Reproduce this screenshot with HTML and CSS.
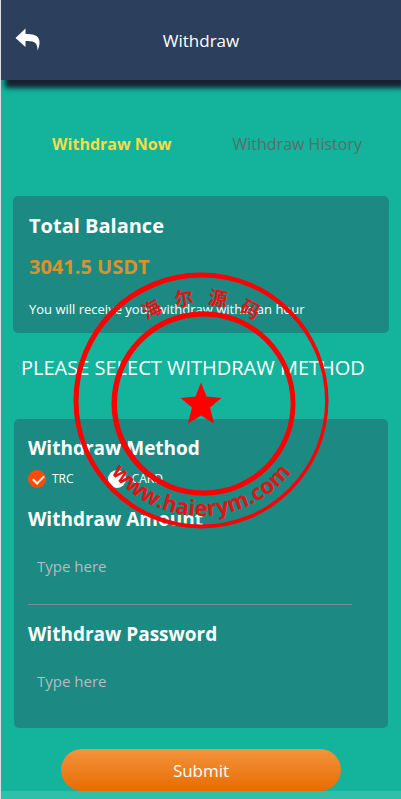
FILE: index.html
```
<!DOCTYPE html>
<html lang="en">
<head>
  <meta charset="UTF-8">
  <title>Withdraw</title>
  <meta name="viewport" content="width=device-width, initial-scale=1.0">
  <link rel="stylesheet" href="styles.css">
</head>
<body>
  <header class="header">
    <button class="back-btn" type="button" aria-label="Back">
      <svg width="26" height="24" viewBox="0 0 26 24">
        <path fill="#fff" d="M0.500 10L10.500 0.500V6C19 5.500 25 8 24.500 15C24.400 18 23.500 20 22.500 22.500C22.800 15.500 20 12.500 10.500 13V19Z"/>
      </svg>
    </button>
    <h1>Withdraw</h1>
  </header>

  <main class="content">
    <nav class="tabs">
      <a class="tab active" href="#now">Withdraw Now</a>
      <a class="tab" href="#history">Withdraw History</a>
    </nav>

    <section class="card balance">
      <h2>Total Balance</h2>
      <p class="amount">3041.5 USDT</p>
      <p class="note">You will receive your withdraw within an hour</p>
    </section>

    <p class="select-title">PLEASE SELECT WITHDRAW METHOD</p>

    <form id="withdraw-form">
      <div class="card fields">
        <h2>Withdraw Method</h2>
        <div class="methods">
          <label><input type="radio" name="method" value="trc" checked> TRC</label>
          <label><input type="radio" name="method" value="card"> CARD</label>
        </div>

        <label class="field-label" for="amount">Withdraw Amount</label>
        <input class="field" id="amount" type="text" placeholder="Type here">

        <label class="field-label" for="password">Withdraw Password</label>
        <input class="field last" id="password" type="password" placeholder="Type here">
      </div>
      <button class="submit-btn" type="submit">Submit</button>
    </form>

    <!-- Site stamp -->
    <svg class="stamp" width="258" height="260" viewBox="0 0 258 260">
      <defs>
        <path id="arc-top" d="M31 130A98 98 0 0 1 227 130"/>
        <path id="arc-bottom" d="M14 129A115 115 0 0 0 244 129"/>
      </defs>
      <g fill="#f00" fill-rule="evenodd">
        <path d="M1.500 128.500a127.500 128 0 1 0 255 0a127.500 128 0 1 0 -255 0ZM6.500 129a123.300 123.500 0 1 0 246.600 0a123.300 123.500 0 1 0 -246.600 0Z"/>
        <path d="M39.500 131.500a92 92.300 0 1 0 184 0a92 92.300 0 1 0 -184 0ZM45 131.500a86.800 87 0 1 0 173.600 0a86.800 87 0 1 0 -173.600 0Z"/>
        <path d="M129 110.500L134.500 124.500L149.500 126L138 135.500L142 151.500L129 143.500L116 151.500L120 135.500L108.500 126L123.500 124.500Z"/>
      </g>
      <text class="stamp-name" lang="zh"><textPath href="#arc-top" startOffset="50%">海&nbsp;&nbsp;&nbsp;尔&nbsp;&nbsp;&nbsp;源&nbsp;&nbsp;&nbsp;码</textPath></text>
      <text class="stamp-url"><textPath href="#arc-bottom" startOffset="50%">www.haierym.com</textPath></text>
    </svg>
  </main>

  <div class="bottom-bar"></div>
</body>
</html>
```

FILE: styles.css
```
* {
  margin: 0;
  padding: 0;
  box-sizing: border-box;
}

body {
  font-family: 'Open Sans', 'Noto Sans', sans-serif;
  background: #13b39c;
  color: #fff;
  min-height: 100vh;
  display: flex;
  flex-direction: column;
  border-left: 1px solid #dde0e0;
  overflow-x: hidden;
}

.header {
  display: grid;
  grid-template-columns: 52px 1fr 52px;
  align-items: center;
  height: 80px;
  background: #2c405d;
  box-shadow: 4px 8px 5px #152131;
}

.header h1 {
  padding-top: 2px;
  font-size: 17px;
  font-weight: 400;
  line-height: 24px;
  text-align: center;
}

.back-btn {
  height: 24px;
  padding-left: 14px;
  background: none;
  border: none;
  text-align: left;
  cursor: pointer;
}

.back-btn svg {
  display: block;
}

.content {
  position: relative;
}

.tabs {
  display: flex;
  padding: 52px 11px 40px 18px;
}

.tab {
  flex: 1;
  font-size: 16px;
  line-height: 24px;
  text-align: center;
  text-decoration: none;
  color: #5c6c6c;
}

.tab.active {
  color: #f8dc46;
  font-weight: 700;
}

.card {
  background: #1c8a83;
  border-radius: 5px;
}

.card h2,
.field-label {
  display: block;
  font-size: 20px;
  font-weight: 700;
  line-height: 28px;
}

.fields h2,
.field-label {
  font-size: 19px;
}

.balance {
  margin: 0 12px;
  padding: 16px 16px 10px;
}

.amount {
  margin: 13px 0;
  font-size: 20px;
  font-weight: 700;
  line-height: 28px;
  color: #dc922b;
}

.note {
  padding: 7px 0 5px;
  font-size: 13px;
  line-height: 17px;
}

.select-title {
  padding: 21px 20px 37px;
  font-size: 20px;
  line-height: 28px;
  white-space: nowrap;
}

.fields {
  margin: 0 13px;
  padding: 15px 14px 8px;
}

.methods {
  display: flex;
  gap: 34px;
  padding: 8px 0 17px;
}

.methods label {
  display: flex;
  align-items: center;
  gap: 6px;
  font-size: 12px;
  line-height: 18px;
}

.methods input {
  appearance: none;
  width: 18px;
  height: 18px;
  border-radius: 50%;
  background: #fff;
}

.methods input:checked {
  background: #ff4c05;
}

.methods input:checked::after {
  content: "";
  display: block;
  width: 9px;
  height: 5px;
  margin: 5px;
  border-left: 2px solid #fff;
  border-bottom: 2px solid #fff;
  transform: rotate(-45deg);
}

.field {
  display: block;
  width: calc(100% - 22px);
  height: 72px;
  margin-bottom: 15px;
  padding: 0 9px 6px;
  background: none;
  border: none;
  border-bottom: 1px solid #7a8a96;
  outline: none;
  font-family: inherit;
  font-size: 15px;
  color: #fff;
}

.field.last {
  margin-bottom: 0;
  border-bottom-color: transparent;
}

.field::placeholder {
  color: #b5bdc0;
}

.submit-btn {
  display: block;
  width: 70%;
  height: 42px;
  margin: 21px auto 0;
  border: none;
  border-radius: 21px;
  background: linear-gradient(#f3943d, #e76c02);
  font-family: inherit;
  font-size: 17px;
  color: #fff;
  cursor: pointer;
}

/* lies over the cards, centred on the page */
.stamp {
  position: absolute;
  top: 192px;
  left: 50%;
  transform: translateX(-50%);
  pointer-events: none;
}

.stamp text {
  fill: #e01515;
  font-weight: 700;
  text-anchor: middle;
}

.stamp-name {
  font-family: 'Noto Sans CJK SC', sans-serif;
  font-size: 19px;
}

.stamp-url {
  font-size: 22px;
}

.bottom-bar {
  flex: 1;
  min-height: 8px;
  background: #30c0a9;
}
```
